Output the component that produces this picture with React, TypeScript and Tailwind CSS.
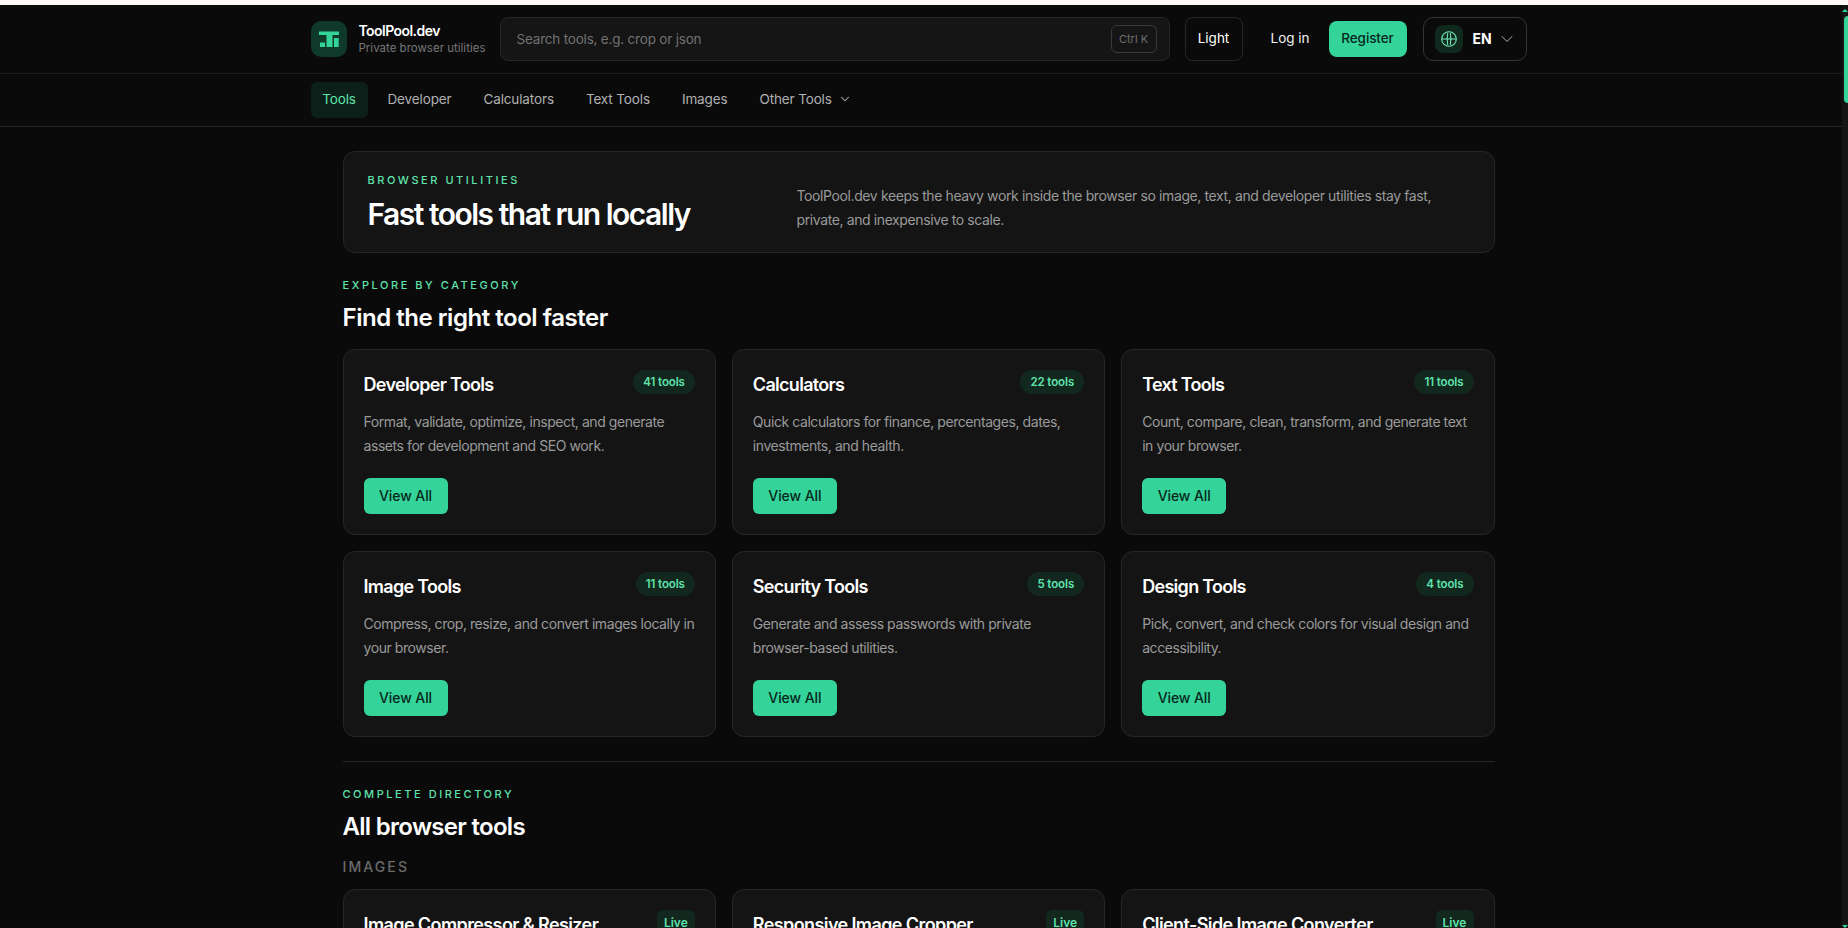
import { ChevronDown } from "lucide-react";

const categories = [
  { title: "Developer Tools", count: "41 tools", desc: "Format, validate, optimize, inspect, and generate assets for development and SEO work." },
  { title: "Calculators", count: "22 tools", desc: "Quick calculators for finance, percentages, dates, investments, and health." },
  { title: "Text Tools", count: "11 tools", desc: "Count, compare, clean, transform, and generate text in your browser." },
  { title: "Image Tools", count: "11 tools", desc: "Compress, crop, resize, and convert images locally in your browser." },
  { title: "Security Tools", count: "5 tools", desc: "Generate and assess passwords with private browser-based utilities." },
  { title: "Design Tools", count: "4 tools", desc: "Pick, convert, and check colors for visual design and accessibility." },
];

const imageTools = ["Image Compressor & Resizer", "Responsive Image Cropper", "Client-Side Image Converter"];
const navItems = ["Developer", "Calculators", "Text Tools", "Images"];

function Logo() {
  return (
    <div className="w-9 h-9 rounded-[10px] bg-[#0f3a2b] shrink-0">
      <svg viewBox="0 0 36 36" className="w-9 h-9" fill="#34d399">
        <rect x="8" y="10.5" width="20" height="3.5" />
        <rect x="15.5" y="14" width="6" height="12" />
        <rect x="9" y="21.5" width="5" height="4.5" />
        <rect x="23" y="17" width="4.7" height="9" />
      </svg>
    </div>
  );
}

function Globe() {
  return (
    <svg viewBox="0 0 16 16" className="w-4 h-4" fill="none" stroke="#6ee7b7" strokeWidth="1.1">
      <circle cx="8" cy="8" r="7.3" />
      <path d="M.7 8h14.6" />
      <path d="M6.7 2.2c-.7 3.8-.7 7.8 0 11.6" />
      <path d="M9.3 2.2c.7 3.8.7 7.8 0 11.6" />
    </svg>
  );
}

function Eyebrow({ children }: { children: string }) {
  return <p className="text-[11px] leading-4 font-medium tracking-[2.55px] text-[#5fe3ad] uppercase">{children}</p>;
}

export default function App() {
  return (
    <div className="h-screen overflow-hidden flex flex-col bg-[#0a0a0a] font-[Inter,sans-serif] text-white">
      <div className="h-[5px] bg-[#fff8f6] shrink-0" />
      <div className="flex flex-1 min-h-0">
        <div className="flex-1 min-w-0 overflow-hidden">
          <header className="border-b border-[#1c1c1c]">
            <div className="w-[1837px] flex justify-center py-3">
              <div className="w-[1216px] flex items-center">
                <Logo />
                <div className="ml-3 w-[141px] shrink-0">
                  <p className="text-sm leading-[18px] font-semibold tracking-[-0.55px]">ToolPool.dev</p>
                  <p className="text-[11.5px] leading-4 text-[#777777] whitespace-nowrap">Private browser utilities</p>
                </div>
                <div className="w-[670px] h-11 rounded-lg border border-[#262626] bg-[#151515] flex items-center justify-between pl-4 pr-3">
                  <span className="text-[13.5px] tracking-[-0.2px] text-[#717171]">Search tools, e.g. crop or json</span>
                  <span className="h-7 w-[46px] rounded-md border border-[#3a3a3a] flex items-center justify-center text-[11px] text-[#6f6f6f]">Ctrl K</span>
                </div>
                <button className="ml-[15px] w-[58px] h-11 pb-[2px] rounded-lg border border-[#262626] text-[13.5px]">Light</button>
                <button className="ml-7 w-[38px] pb-[2px] whitespace-nowrap text-[13.5px] text-[#f0f0f0]">Log in</button>
                <button className="ml-5 w-[78px] h-9 pb-[2px] rounded-lg bg-[#34d399] text-[13.5px] font-medium tracking-[-0.1px] text-[#06281c]">Register</button>
                <div className="ml-4 w-[104px] h-11 rounded-[10px] border border-[#333333] flex items-center pl-[11px]">
                  <span className="w-7 h-7 rounded-lg bg-[#10291f] flex items-center justify-center">
                    <Globe />
                  </span>
                  <span className="ml-[10px] text-sm font-bold">EN</span>
                  <ChevronDown className="ml-[5px] w-5 h-5 text-[#8f8f8f]" strokeWidth={1.25} />
                </div>
              </div>
            </div>
          </header>

          <nav className="border-b border-[#262626]">
            <div className="w-[1837px] flex justify-center py-2">
              <div className="w-[1216px] flex items-center gap-2 text-[13.5px] tracking-[-0.13px] text-[#b0b0b0]">
                <span className="h-9 w-[57px] rounded-md bg-[#0c1f18] text-[#5fe3ad] flex items-center justify-center pb-[2px]">Tools</span>
                {navItems.map((item) => (
                  <span key={item} className="px-3 pb-[2px]">
                    {item}
                  </span>
                ))}
                <span className="px-3 pb-[2px] flex items-center gap-[6px]">
                  Other Tools <ChevronDown className="w-[14px] h-[14px]" strokeWidth={1.75} />
                </span>
              </div>
            </div>
          </nav>

          <main className="w-[1837px] flex justify-center pt-6">
            <div className="w-[1152px]">
              <section className="rounded-xl border border-[#262626] bg-[#141414] px-6 py-5 flex items-end">
                <div className="w-[429px] shrink-0">
                  <Eyebrow>Browser utilities</Eyebrow>
                  <h1 className="mt-2 text-3xl leading-9 font-semibold tracking-[-1.5px]">Fast tools that run locally</h1>
                </div>
                <p className="text-sm leading-6 tracking-[-0.39px] text-[#9a9a9a] pr-2">
                  ToolPool.dev keeps the heavy work inside the browser so image, text, and developer utilities stay fast, private, and inexpensive to scale.
                </p>
              </section>

              <section className="mt-6">
                <Eyebrow>Explore by category</Eyebrow>
                <h2 className="mt-2 pt-px text-2xl leading-[31px] font-semibold tracking-[-0.47px]">Find the right tool faster</h2>
                <div className="mt-4 grid grid-cols-3 gap-4">
                  {categories.map((c) => (
                    <div key={c.title} className="rounded-xl border border-[#262626] bg-[#141414] p-5">
                      <div className="flex items-start justify-between">
                        <h3 className="pt-px text-lg leading-[27px] font-semibold tracking-[-0.7px]">{c.title}</h3>
                        <span className="h-6 px-[10px] pt-px rounded-full bg-[#12271e] text-[#5fe3ad] text-[11.5px] font-semibold tracking-[-0.1px] flex items-center">{c.count}</span>
                      </div>
                      <p className="mt-3 text-sm leading-6 tracking-[-0.43px] text-[#9a9a9a]">{c.desc}</p>
                      <button className="mt-5 w-[84px] h-9 rounded-md bg-[#34d399] text-sm font-medium tracking-[-0.1px] text-[#06281c]">View All</button>
                    </div>
                  ))}
                </div>
              </section>

              <div className="mt-6 border-t border-[#262626]" />

              <section className="mt-6">
                <Eyebrow>Complete directory</Eyebrow>
                <h2 className="mt-2 pt-px text-2xl leading-[31px] font-semibold tracking-[-0.7px]">All browser tools</h2>
                <p className="mt-[15px] mb-[1px] text-sm leading-5 font-medium tracking-[0.15em] text-[#6b6b6b]">IMAGES</p>
                <div className="mt-3 grid grid-cols-3 gap-4">
                  {imageTools.map((t) => (
                    <div key={t} className="rounded-xl border border-[#262626] bg-[#141414] p-5">
                      <div className="flex items-start justify-between">
                        <h3 className="pt-px text-lg leading-[27px] font-semibold tracking-[-0.6px]">{t}</h3>
                        <span className="h-6 w-[38px] pt-px rounded-md bg-[#12271e] text-[#5fe3ad] text-xs font-semibold flex items-center justify-center">Live</span>
                      </div>
                    </div>
                  ))}
                </div>
              </section>
            </div>
          </main>
        </div>

        <div className="relative w-[6px] shrink-0 bg-[#141414]">
          <span className="absolute top-[4px] right-0 w-0 h-0 border-x-[3px] border-x-transparent border-b-[3px] border-b-[#34d399]" />
          <div className="absolute top-[11px] right-0 w-1 h-[87px] rounded-l-sm bg-[#34d399]" />
          <span className="absolute bottom-0 right-0 w-0 h-0 border-x-[3px] border-x-transparent border-t-[3px] border-t-[#34d399]" />
        </div>
      </div>
    </div>
  );
}
